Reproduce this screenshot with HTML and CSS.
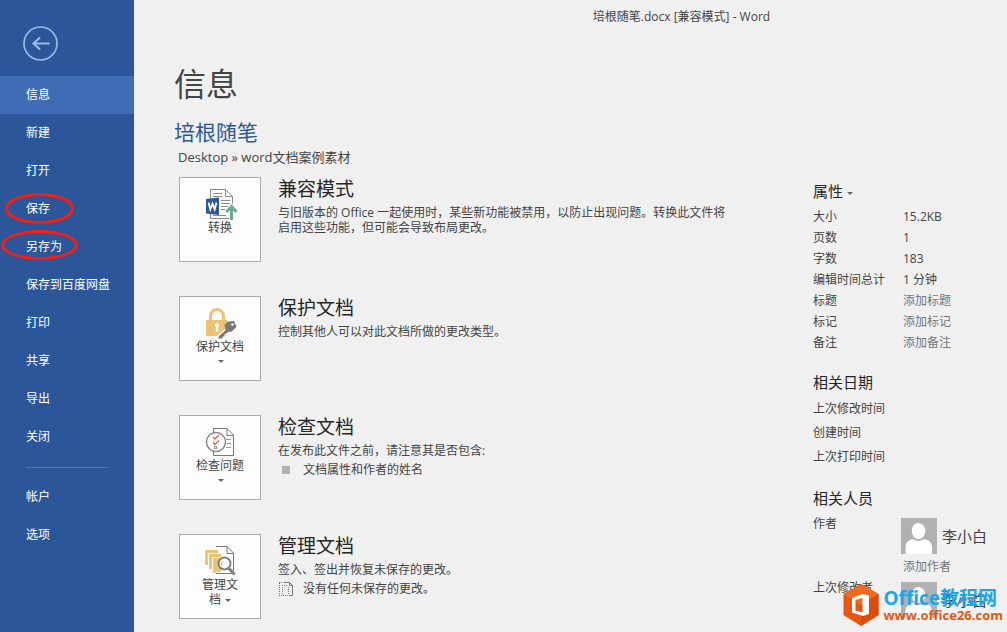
FILE: index.html
```html
<!DOCTYPE html>
<html lang="zh-CN">
  <head>
    <meta charset="UTF-8" />
    <meta name="viewport" content="width=device-width, initial-scale=1.0" />
    <title>培根随笔.docx [兼容模式] - Word</title>
    <link rel="stylesheet" href="styles.css">
  </head>
  <body>
    <aside class="sidebar">
      <button class="back" aria-label="返回">
        <svg width="36" height="36" viewBox="0 0 36 36" fill="none" stroke="#9db8e2">
          <circle cx="17.5" cy="17.5" r="16.5" stroke-width="1.700" />
          <path d="M26.500 17.500H10.500M17 11.500L10.500 17.500L17 23.500" stroke-width="2.200" />
        </svg>
      </button>
      <nav class="menu">
        <a href="#" class="active">信息</a>
        <a href="#">新建</a>
        <a href="#">打开</a>
        <a href="#" class="marked">保存</a>
        <a href="#" class="marked wide">另存为</a>
        <a href="#">保存到百度网盘</a>
        <a href="#">打印</a>
        <a href="#">共享</a>
        <a href="#">导出</a>
        <a href="#">关闭</a>
        <hr />
        <a href="#">帐户</a>
        <a href="#">选项</a>
      </nav>
    </aside>

    <main>
      <p class="windowTitle">培根随笔.docx [兼容模式] - Word</p>
      <h1>信息</h1>
      <h2>培根随笔</h2>
      <p class="path">Desktop » word文档案例素材</p>

      <div class="columns">
        <div class="tasks">
          <section class="task">
            <button class="card">
              <svg width="34" height="32" viewBox="0 0 34 32">
                <path d="M5.500 1.500H20.500L27.500 8.500V30.500H5.500Z" fill="#fff" stroke="#8a8a8a" />
                <path d="M20.500 1.500V8.500H27.500" fill="none" stroke="#8a8a8a" />
                <path d="M8 5.500H17M8 8.500H17M16 12.500H25M16 15.500H25M16 18.500H25M16 21.500H23M8 27.500H21" stroke="#8a8a8a" />
                <path d="M1 11L14 9.500V27L1 25.500Z" fill="#2b579a" />
                <path d="M3.500 14.500L5.300 21.500L7.500 15.500L9.700 21.500L11.500 14.500" fill="none" stroke="#fff" stroke-width="1.800" />
                <path d="M26.500 32V20M21 24.500L26.500 18.500L32 24.500" fill="none" stroke="#fff" stroke-width="5" />
                <path d="M26.500 32V19.500M21.500 24L26.500 18.500L31.500 24" fill="none" stroke="#6fa893" stroke-width="3" />
              </svg>
              <span>转换</span>
            </button>
            <div class="info">
              <h3>兼容模式</h3>
              <p>与旧版本的 Office 一起使用时，某些新功能被禁用，以防止出现问题。转换此文件将启用这些功能，但可能会导致布局更改。</p>
            </div>
          </section>

          <section class="task">
            <button class="card">
              <svg width="34" height="32" viewBox="0 0 34 32">
                <path d="M5.500 14V9A6.500 6.500 0 0 1 18.500 9V14" fill="none" stroke="#edc173" stroke-width="3" />
                <rect x="1" y="13" width="21" height="16" rx="1" fill="#edc173" />
                <path d="M12 16a2.200 2.200 0 0 1 1.200 4V25h-2.400V20A2.200 2.200 0 0 1 12 16Z" fill="#fff" />
                <path d="M23 21L13.500 29.500V31.500H17.500V29.500H19.500V27.500L25 24" fill="#777" stroke="#fff" stroke-width="3" paint-order="stroke" />
                <path d="M23 14.500L29 14L31.500 20L26 25L20.500 23L19.500 18Z" fill="#777" />
                <circle cx="27.500" cy="17.500" r="1.300" fill="#fff" />
              </svg>
              <span>保护文档</span>
              <span class="arrow"></span>
            </button>
            <div class="info">
              <h3>保护文档</h3>
              <p>控制其他人可以对此文档所做的更改类型。</p>
            </div>
          </section>

          <section class="task">
            <button class="card">
              <svg width="34" height="32" viewBox="0 0 34 32" fill="none">
                <path d="M8.500 2.500H22L28.500 9V29.500H8.500Z" fill="#fff" stroke="#777" />
                <path d="M22 2.500V9.500H28.500" stroke="#777" />
                <path d="M21 13.500H26M22 17.500H26M21 21.500H26" stroke="#999" />
                <circle cx="11" cy="16" r="9.500" fill="#fff" stroke="#8a8a8a" stroke-width="1.500" />
                <path d="M8 11L10 13L14 9M8 16.500L10 18.500L14 14.500" stroke="#e0664f" stroke-width="1.500" />
                <rect x="9.500" y="20.500" width="2" height="2" stroke="#999" />
              </svg>
              <span>检查问题</span>
              <span class="arrow"></span>
            </button>
            <div class="info">
              <h3>检查文档</h3>
              <p>在发布此文件之前，请注意其是否包含:</p>
              <ul>
                <li><i class="square"></i>文档属性和作者的姓名</li>
              </ul>
            </div>
          </section>

          <section class="task">
            <button class="card">
              <svg width="34" height="32" viewBox="0 0 34 32" fill="none">
                <path d="M11 1.500H22L28.500 8V28.500H11" fill="#fff" stroke="#777" />
                <path d="M22 1.500V8.500H28.500" stroke="#777" />
                <path d="M1.500 20V6.500H13M5.500 24V10.500H16M9.500 28V14.500H17" stroke="#edc173" stroke-width="2.800" />
                <path d="M10 15H16V27H10Z" fill="#edc173" />
                <circle cx="19.500" cy="18.500" r="6" fill="#fff" stroke="#808080" stroke-width="2" />
                <path d="M17.500 21a3.500 3.500 0 0 1 0-5" stroke="#edc173" stroke-width="1.500" />
                <path d="M23.500 23L29.500 29.500" stroke="#808080" stroke-width="3" />
              </svg>
              <span>管理文</span>
              <span>档<i class="arrow inline"></i></span>
            </button>
            <div class="info">
              <h3>管理文档</h3>
              <p>签入、签出并恢复未保存的更改。</p>
              <ul>
                <li>
                  <svg width="16" height="16" viewBox="0 0 16 16" fill="none" stroke="#777">
                    <path d="M5.500 1.500H11.500L14.500 4.500V14.500H11M11.500 1.500V4.500H14.500" />
                    <path d="M1.500 2V14M1 1.500H5M1 14.500H11M4.500 4V14M10.500 6V14M4 4.500H10" stroke-dasharray="1 1" />
                  </svg>没有任何未保存的更改。
                </li>
              </ul>
            </div>
          </section>
        </div>

        <div class="properties">
          <h4>属性<i class="arrow inline"></i></h4>
          <dl class="details">
            <dt>大小</dt><dd>15.2KB</dd>
            <dt>页数</dt><dd>1</dd>
            <dt>字数</dt><dd>183</dd>
            <dt>编辑时间总计</dt><dd>1 分钟</dd>
            <dt>标题</dt><dd class="add">添加标题</dd>
            <dt>标记</dt><dd class="add">添加标记</dd>
            <dt>备注</dt><dd class="add">添加备注</dd>
          </dl>

          <h4>相关日期</h4>
          <ul class="dates">
            <li>上次修改时间</li>
            <li>创建时间</li>
            <li>上次打印时间</li>
          </ul>

          <h4>相关人员</h4>
          <dl class="people">
            <dt>作者</dt>
            <dd>
              <div class="person">
                <svg width="36" height="36" viewBox="0 0 36 36">
                  <rect width="36" height="36" fill="#b1b1b1" />
                  <ellipse cx="17.500" cy="13" rx="6.800" ry="8" fill="#fff" />
                  <path d="M4.500 36V29Q5 22 12 21Q17.500 25 23 21Q30.500 22 31 29V36Z" fill="#fff" />
                </svg>
                <span>李小白</span>
              </div>
              <p class="add">添加作者</p>
            </dd>
            <dt>上次修改者</dt>
            <dd>
              <div class="person">
                <svg width="36" height="36" viewBox="0 0 36 36">
                  <rect width="36" height="36" fill="#b1b1b1" />
                  <ellipse cx="17.500" cy="13" rx="6.800" ry="8" fill="#fff" />
                  <path d="M4.500 36V29Q5 22 12 21Q17.500 25 23 21Q30.500 22 31 29V36Z" fill="#fff" />
                </svg>
                <span>李小白</span>
              </div>
            </dd>
          </dl>
        </div>
      </div>
    </main>

    <div class="watermark">
      <svg width="36" height="44" viewBox="0 0 36 44">
        <path d="M18 1L35.500 11V32L18 43L0.500 32V11Z" fill="#e8560f" />
        <path d="M18 1L35.500 11L18 22L0.500 11Z" fill="#ee6a1c" />
        <path d="M35.500 11V32L18 43V22Z" fill="#dd4a0a" />
        <path fill-rule="evenodd" d="M9 15L20 11L26 12.500V31L20 33L9 29.500ZM12.500 17V27.500L19.500 29.500V15Z" fill="#fff" />
      </svg>
      <div>
        <p class="brand">Office教程网</p>
        <p class="site">www.office26.com</p>
      </div>
    </div>
  </body>
</html>
```
FILE: styles.css
```css
* {
  margin: 0;
  padding: 0;
  box-sizing: border-box;
  font-family: "Open Sans", "Noto Sans CJK SC", sans-serif;
}

body {
  display: flex;
  position: relative;
  min-height: 100vh;
  background: #f0f0f0;
  color: #444;
  font-size: 12px;
  line-height: 15px;
}

ul {
  list-style: none;
}

svg {
  display: block;
  flex-shrink: 0;
}

/* sidebar */
.sidebar {
  width: 134px;
  flex-shrink: 0;
  padding-top: 26px;
  background: #2b579a;
}

.back {
  display: block;
  margin: 0 0 14px 23px;
  border: none;
  background: none;
  cursor: pointer;
}

.menu a {
  display: block;
  position: relative;
  padding-left: 26px;
  line-height: 38px;
  color: #fff;
  text-decoration: none;
}

.menu a.active,
.menu a:hover {
  background: #3e6db5;
}

.menu hr {
  margin: 11px 26px 10px;
  border: none;
  border-top: 1px solid #4a74b4;
}

/* red ring round a menu item */
.menu .marked::after {
  content: "";
  box-sizing: border-box;
  position: absolute;
  left: 5px;
  top: 3px;
  width: 69px;
  height: 31px;
  border: 3px solid #fb1d14;
  border-radius: 50%;
}

.menu .wide::after {
  left: 1px;
  top: 2px;
  width: 77px;
  height: 30px;
}

/* main */
main {
  flex: 1;
  padding: 6px 0 12px 40px;
}

.windowTitle {
  padding-left: 182px;
  line-height: 22px;
  text-align: center;
}

h1 {
  margin-top: 32px;
  font-size: 32px;
  font-weight: 400;
  line-height: 48px;
}

h2 {
  margin-top: 11px;
  font-size: 21px;
  font-weight: 400;
  line-height: 26px;
  color: #2b579a;
}

.path {
  margin: 2px 0 10px 4px;
  font-size: 13px;
  line-height: 20px;
}

.columns {
  display: flex;
  justify-content: space-between;
  padding-left: 5px;
}

.tasks {
  display: flex;
  flex-direction: column;
  gap: 34px;
}

.task {
  display: flex;
  gap: 17px;
}

.card {
  display: flex;
  flex-direction: column;
  align-items: center;
  flex-shrink: 0;
  width: 82px;
  height: 85px;
  padding-top: 10px;
  border: 1px solid #ababab;
  background: #fdfdfd;
  color: #444;
  font-size: 12px;
  line-height: 15px;
  cursor: pointer;
}

.card svg {
  margin-left: 4px;
}

.arrow {
  margin: 6px 0 0 2px;
  border: 3px solid transparent;
  border-top-color: #666;
  border-bottom: none;
}

.arrow.inline {
  display: inline-block;
  margin: 0 0 2px 4px;
}

.info {
  max-width: 456px;
}

.info h3 {
  margin-bottom: 4px;
  font-size: 19px;
  font-weight: 400;
  line-height: 24px;
  color: #262626;
}

.info li {
  display: flex;
  align-items: center;
  gap: 9px;
  margin-top: 4px;
  line-height: 16px;
}

.square {
  width: 8px;
  height: 8px;
  margin: 0 4px;
  background: #b1b1b1;
}

/* properties */
.properties {
  flex-shrink: 0;
  width: 194px;
  padding-top: 4px;
}

.properties h4 {
  margin-bottom: 5px;
  font-size: 15px;
  font-weight: 400;
  line-height: 20px;
  color: #262626;
}

.details,
.people {
  display: grid;
  grid-template-columns: 90px 1fr;
  line-height: 21px;
}

.people {
  grid-template-columns: 88px 1fr;
}

.details,
.dates {
  margin-bottom: 19px;
}

.dates {
  line-height: 24px;
}

.add {
  color: #767676;
}

.person {
  display: flex;
  align-items: center;
  gap: 5px;
  padding-top: 5px;
  font-size: 15px;
}

.people .add {
  padding: 2px 0 0 2px;
}

/* watermark */
.watermark {
  display: flex;
  align-items: center;
  gap: 4px;
  position: absolute;
  right: 4px;
  bottom: 5px;
  font-weight: 700;
}

.brand {
  font-size: 19px;
  line-height: 20px;
  color: #1ba5ea;
}

.site {
  font-size: 13px;
  line-height: 15px;
  color: #e8560f;
}
```
